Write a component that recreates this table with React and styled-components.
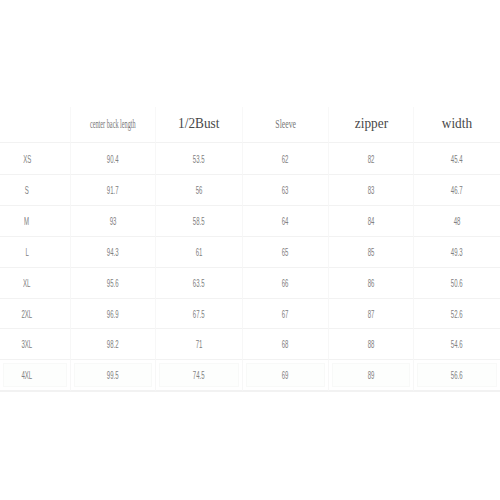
import React from "react";
import styled, { createGlobalStyle } from "styled-components";

const headers = [
  { label: "", narrow: false },
  { label: "center back length", narrow: true, scale: 0.5 },
  { label: "1/2Bust", narrow: false },
  { label: "Sleeve", narrow: true, scale: 0.62 },
  { label: "zipper", narrow: false },
  { label: "width", narrow: false },
];

const rows = [
  ["XS", "90.4", "53.5", "62", "82", "45.4"],
  ["S", "91.7", "56", "63", "83", "46.7"],
  ["M", "93", "58.5", "64", "84", "48"],
  ["L", "94.3", "61", "65", "85", "49.3"],
  ["XL", "95.6", "63.5", "66", "86", "50.6"],
  ["2XL", "96.9", "67.5", "67", "87", "52.6"],
  ["3XL", "98.2", "71", "68", "88", "54.6"],
  ["4XL", "99.5", "74.5", "69", "89", "56.6"],
];

export default function App() {
  return (
    <>
      <GlobalStyle />
      <Page>
        <Table>
          {headers.map((h, i) => (
            <HeadCell key={i} $first={i === 0}>
              <HeadText $narrow={h.narrow} $scale={h.scale}>
                {h.label}
              </HeadText>
            </HeadCell>
          ))}
          {rows.map((row, r) =>
            row.map((v, c) => (
              <Cell
                key={r + "-" + c}
                $first={c === 0}
                $last={r === rows.length - 1}
              >
                <Value>{v}</Value>
              </Cell>
            ))
          )}
        </Table>
      </Page>
    </>
  );
}

const GlobalStyle = createGlobalStyle`
  html, body {
    margin: 0;
    padding: 0;
    background: #ffffff;
  }
`;

const Page = styled.div`
  width: 500px;
  height: 500px;
  padding-top: 107px;
  box-sizing: border-box;
  background: #ffffff;
`;

const Table = styled.div`
  display: grid;
  grid-template-columns: 70px 85px 87px 86px 85px 87px;
  grid-template-rows: 36px 32px 31px 31px 31px 31px 30px 31px 31px;
  border-bottom: 1px solid #f2f2f2;
`;

const HeadCell = styled.div`
  display: flex;
  align-items: center;
  justify-content: center;
  padding-bottom: 1px;
  border-bottom: 1px solid #f2f2f2;
  border-left: ${(p) => (p.$first ? "none" : "1px solid #f8f8f8")};
`;

const HeadText = styled.span`
  display: inline-block;
  white-space: nowrap;
  font-family: "Liberation Serif", "DejaVu Serif", serif;
  color: ${(p) => (p.$narrow ? "#777777" : "#484848")};
  font-size: ${(p) => (p.$narrow ? "12.5px" : "14px")};
  transform: scaleX(${(p) => (p.$narrow ? p.$scale : 0.95)});
`;

const Cell = styled.div`
  display: flex;
  align-items: center;
  justify-content: center;
  padding-right: ${(p) => (p.$first ? "16px" : "0")};
  border-bottom: 1px solid #f2f2f2;
  border-left: ${(p) => (p.$first ? "none" : "1px solid #f7f7f7")};
  background: ${(p) => (p.$last ? "#fdfefd" : "#ffffff")};
  box-shadow: ${(p) =>
    p.$last ? "inset 0 0 0 3px #ffffff, inset 0 0 0 4px #f8f9f8" : "none"};
`;

const Value = styled.span`
  display: inline-block;
  font-family: "Liberation Sans", "DejaVu Sans", sans-serif;
  font-size: 11px;
  color: #808080;
  transform: scaleX(0.55);
`;
